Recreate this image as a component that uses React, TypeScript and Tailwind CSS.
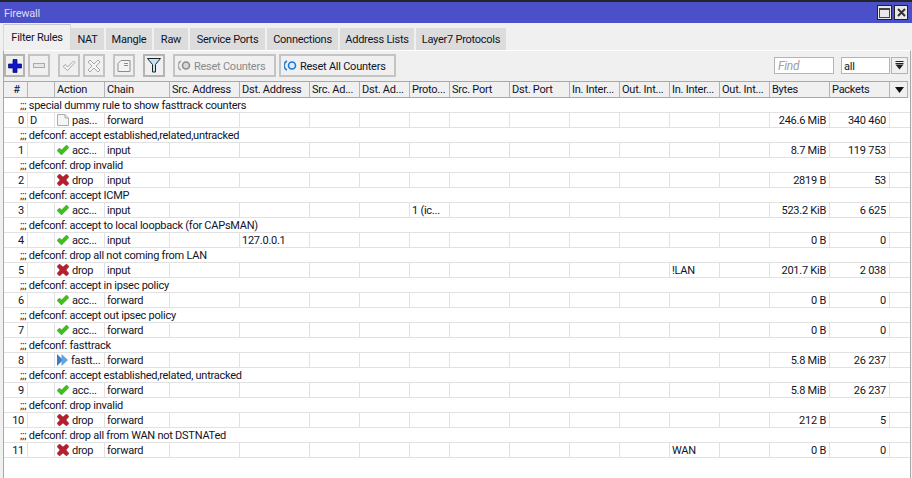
// App.tsx
import type { ReactNode } from 'react';

const cols = 'grid grid-cols-[24px_27px_50px_65px_70px_70px_50px_50px_40px_60px_60px_50px_50px_50px_50px_60px_60px_19px]';

const headers = [
  '#', '', 'Action', 'Chain', 'Src. Address', 'Dst. Address', 'Src. Ad...', 'Dst. Ad...', 'Proto...',
  'Src. Port', 'Dst. Port', 'In. Inter...', 'Out. Int...', 'In. Inter...', 'Out. Int...', 'Bytes', 'Packets',
];

const tabs = [
  { label: 'NAT', w: 'w-[35px]' },
  { label: 'Mangle', w: 'w-[48px]' },
  { label: 'Raw', w: 'w-[36px]' },
  { label: 'Service Ports', w: 'w-[77px]' },
  { label: 'Connections', w: 'w-[73px]' },
  { label: 'Address Lists', w: 'w-[76px]' },
  { label: 'Layer7 Protocols', w: 'w-[92px]' },
];

type Kind = 'accept' | 'drop' | 'passthrough' | 'fasttrack';

interface Rule {
  comment: string;
  num: number;
  flag?: string;
  kind: Kind;
  action: string;
  chain: string;
  dst?: string;
  proto?: string;
  inIf?: string;
  bytes: string;
  packets: string;
}

const rules: Rule[] = [
  { comment: ';;; special dummy rule to show fasttrack counters', num: 0, flag: 'D', kind: 'passthrough', action: 'pas...', chain: 'forward', bytes: '246.6 MiB', packets: '340 460' },
  { comment: ';;; defconf: accept established,related,untracked', num: 1, kind: 'accept', action: 'acc...', chain: 'input', bytes: '8.7 MiB', packets: '119 753' },
  { comment: ';;; defconf: drop invalid', num: 2, kind: 'drop', action: 'drop', chain: 'input', bytes: '2819 B', packets: '53' },
  { comment: ';;; defconf: accept ICMP', num: 3, kind: 'accept', action: 'acc...', chain: 'input', proto: '1 (ic...', bytes: '523.2 KiB', packets: '6 625' },
  { comment: ';;; defconf: accept to local loopback (for CAPsMAN)', num: 4, kind: 'accept', action: 'acc...', chain: 'input', dst: '127.0.0.1', bytes: '0 B', packets: '0' },
  { comment: ';;; defconf: drop all not coming from LAN', num: 5, kind: 'drop', action: 'drop', chain: 'input', inIf: '!LAN', bytes: '201.7 KiB', packets: '2 038' },
  { comment: ';;; defconf: accept in ipsec policy', num: 6, kind: 'accept', action: 'acc...', chain: 'forward', bytes: '0 B', packets: '0' },
  { comment: ';;; defconf: accept out ipsec policy', num: 7, kind: 'accept', action: 'acc...', chain: 'forward', bytes: '0 B', packets: '0' },
  { comment: ';;; defconf: fasttrack', num: 8, kind: 'fasttrack', action: 'fastt...', chain: 'forward', bytes: '5.8 MiB', packets: '26 237' },
  { comment: ';;; defconf: accept established,related, untracked', num: 9, kind: 'accept', action: 'acc...', chain: 'forward', bytes: '5.8 MiB', packets: '26 237' },
  { comment: ';;; defconf: drop invalid', num: 10, kind: 'drop', action: 'drop', chain: 'forward', bytes: '212 B', packets: '5' },
  { comment: ';;; defconf: drop all from WAN not DSTNATed', num: 11, kind: 'drop', action: 'drop', chain: 'forward', inIf: 'WAN', bytes: '0 B', packets: '0' },
];

const ActionIcon = ({ kind }: { kind: Kind }) => {
  if (kind === 'accept') {
    return (
      <svg width="12" height="10" viewBox="0 0 12 10" className="shrink-0">
        <path d="M0 5.5 L2.5 3 L4.5 5 L9.5 0 L12 2.5 L4.5 10 Z" fill="#3fbf1c" stroke="#2c9a12" strokeWidth="0.5" />
      </svg>
    );
  }
  if (kind === 'drop') {
    return (
      <svg width="12" height="12" viewBox="0 0 12 12" className="shrink-0">
        <path d="M0 2.5 L2.5 0 L6 3 L9.5 0 L12 2.5 L9 6 L12 9.5 L9.5 12 L6 9 L2.5 12 L0 9.5 L3 6 Z" fill="#b3202e" stroke="#9c1a26" strokeWidth="0.5" />
      </svg>
    );
  }
  if (kind === 'fasttrack') {
    return (
      <svg width="11" height="12" viewBox="0 0 11 12" className="shrink-0">
        <path d="M0 0 L6 6 L0 12 Z" fill="#3a80c0" />
        <path d="M4.5 0 L11 6 L4.5 12 Z" fill="#62a6de" />
      </svg>
    );
  }
  return (
    <svg width="12" height="12" viewBox="0 0 12 12" className="shrink-0">
      <path d="M0.5 0.5 H8 L11.5 4 V11.5 H0.5 Z" fill="#f4f6f6" stroke="#a8adad" />
      <path d="M8 0.5 V4 H11.5" fill="#dfe3e3" stroke="#a8adad" />
    </svg>
  );
};

const ToolButton = ({ children, active, width = 'w-[22px]' }: { children: ReactNode; active?: boolean; width?: string }) => (
  <div className={`${width} h-[23px] flex items-center justify-center border-2 ${active ? 'border-[#b4b4b4]' : 'border-[#c4c4c4]'} bg-[#f0f0f0]`}>
    {children}
  </div>
);

const Cell = ({ children, right }: { children?: ReactNode; right?: boolean }) => (
  <div className={`h-[14px] pt-[1px] border-r border-[#e2e2e2] overflow-hidden whitespace-nowrap leading-[13px] flex items-center ${right ? 'justify-end pr-[3px]' : 'pl-[2px]'}`}>
    {children}
  </div>
);

const RuleRows = ({ rule }: { rule: Rule }) => (
  <>
    <div className="h-[15px] border-b border-[#e2e2e2] pl-[16px] leading-[16px] whitespace-nowrap">{rule.comment}</div>
    <div className={`${cols} h-[15px] border-b border-[#e2e2e2]`}>
      <Cell right>{rule.num}</Cell>
      <Cell>{rule.flag}</Cell>
      <div className="h-[14px] pl-[2px] flex items-center gap-[3px] border-r border-[#e2e2e2] whitespace-nowrap overflow-hidden">
        <ActionIcon kind={rule.kind} />
        <span className="pt-[2px] leading-[12px]">{rule.action}</span>
      </div>
      <Cell>{rule.chain}</Cell>
      <Cell />
      <Cell>{rule.dst}</Cell>
      <Cell />
      <Cell />
      <Cell>{rule.proto}</Cell>
      <Cell />
      <Cell />
      <Cell />
      <Cell />
      <Cell>{rule.inIf}</Cell>
      <Cell />
      <Cell right>{rule.bytes}</Cell>
      <Cell right>{rule.packets}</Cell>
      <div />
    </div>
  </>
);

export default function App() {
  return (
    <div className="w-[912px] h-[478px] overflow-hidden flex flex-col bg-[#f0f0f0] text-[#10142a] text-[11px] tracking-[-0.25px] [font-family:Roboto,'Liberation_Sans',sans-serif]">
      {/* title bar */}
      <div className="h-[23px] shrink-0 border-t-2 border-[#22242c] bg-[#4b50c8] flex items-center justify-between pl-[4px] pr-[4px] text-[#dcdcf0]">
        <span className="pt-[3px]">Firewall</span>
        <div className="flex gap-[2px]">
          <div className="w-[15px] h-[15px] bg-[#e8e8e8] border border-[#222] flex items-center justify-center">
            <div className="w-[11px] h-[10px] border border-[#444] border-t-2" />
          </div>
          <div className="w-[14px] h-[15px] bg-[#e8e8e8] border border-[#222] flex items-center justify-center">
            <svg width="9" height="9" viewBox="0 0 9 9">
              <path d="M1 1 L8 8 M8 1 L1 8" stroke="#333" strokeWidth="2" />
            </svg>
          </div>
        </div>
      </div>

      {/* tabs */}
      <div className="h-[27px] shrink-0 pl-[3px] flex items-end whitespace-nowrap">
        <div className="w-[68px] h-[26px] pt-[2px] bg-[#f0f0f0] border border-b-0 border-[#d8d8d8] border-t-[#c8c8c8] flex items-center justify-center">Filter Rules</div>
        {tabs.map((tab) => (
          <div key={tab.label} className={`${tab.w} h-[22px] pt-[3px] bg-[#dcdcdc] border-r-2 border-[#f0f0f0] flex items-center justify-center`}>
            {tab.label}
          </div>
        ))}
      </div>

      {/* pane under the tabs */}
      <div className="flex-1 min-h-0 ml-[3px] mr-[1px] border-x border-t border-x-[#a8a8a8] border-t-white flex flex-col">
        <div className="h-[30px] shrink-0 pr-[2px] pt-[3px] flex items-start whitespace-nowrap">
          <ToolButton active width="w-[21px]">
            <svg width="14" height="14" viewBox="0 0 14 14">
              <path d="M5 0.5 H9 V5 H13.5 V9 H9 V13.5 H5 V9 H0.5 V5 H5 Z" fill="#0f15c9" stroke="#050868" strokeWidth="0.7" />
            </svg>
          </ToolButton>
          <div className="ml-[3px]">
            <ToolButton>
              <div className="w-[12px] h-[5px] border border-[#aaa] bg-[#e6e6e6]" />
            </ToolButton>
          </div>
          <div className="ml-[8px]">
            <ToolButton>
              <svg width="14" height="12" viewBox="0 0 14 12">
                <path d="M1 6.5 L3.5 4.5 L5.5 7 L11.5 1 L13 2.5 L5.5 10.5 Z" fill="#f4f4f4" stroke="#a8a8a8" />
              </svg>
            </ToolButton>
          </div>
          <div className="ml-[3px]">
            <ToolButton>
              <svg width="14" height="14" viewBox="0 0 14 14">
                <path d="M1 3 L3 1 L7 5 L11 1 L13 3 L9 7 L13 11 L11 13 L7 9 L3 13 L1 11 L5 7 Z" fill="#f4f4f4" stroke="#a8a8a8" />
              </svg>
            </ToolButton>
          </div>
          <div className="ml-[8px]">
            <ToolButton>
              <svg width="14" height="12" viewBox="0 0 14 12">
                <path d="M1 3.5 L4 0.5 H13 V11.5 H1 Z M7 3.5 H11 M7 5.5 H11" fill="#f4f4f4" stroke="#8c8c8c" />
              </svg>
            </ToolButton>
          </div>
          <div className="ml-[8px]">
            <ToolButton active>
              <svg width="14" height="15" viewBox="0 0 14 15">
                <path d="M0.5 0.5 H13.5 L8.5 6.5 V14 H5.5 V6.5 Z" fill="#bfe6f5" stroke="#222" />
              </svg>
            </ToolButton>
          </div>
          <div className="ml-[8px] w-[103px] h-[23px] border-2 border-[#c4c4c4] flex items-center pl-[3px] gap-[3px] text-[#8a8a8a]">
            <svg width="13" height="11" viewBox="0 0 13 11" className="shrink-0">
              <path d="M3 1 A5 5 0 0 0 3 10" fill="none" stroke="#a8a8a8" strokeWidth="1.6" />
              <circle cx="8" cy="5.5" r="3.5" fill="#d8d8d8" stroke="#8c8c8c" strokeWidth="1.6" />
            </svg>
            <span className="pt-[3px]">Reset Counters</span>
          </div>
          <div className="ml-[3px] w-[117px] h-[23px] border-2 border-[#c4c4c4] flex items-center pl-[3px] gap-[3px]">
            <svg width="13" height="11" viewBox="0 0 13 11" className="shrink-0">
              <path d="M3 1 A5 5 0 0 0 3 10" fill="none" stroke="#2a7fd0" strokeWidth="1.6" />
              <circle cx="8" cy="5.5" r="3.5" fill="#dceefc" stroke="#1a78d8" strokeWidth="1.6" />
            </svg>
            <span className="pt-[3px]">Reset All Counters</span>
          </div>
          <div className="ml-auto mt-[3px] flex items-start">
            <div className="w-[60px] h-[17px] bg-white border border-[#b4b4b4] pl-[3px] leading-[16px] italic text-[12px] text-[#a0a0a0]">Find</div>
            <div className="ml-[7px] w-[49px] h-[17px] bg-white border border-[#b4b4b4] pl-[2px] leading-[17px]">all</div>
            <div className="ml-[1px] w-[17px] h-[17px] border border-[#b4b4b4] flex items-center justify-center">
              <svg width="9" height="9" viewBox="0 0 9 9">
                <path d="M0.5 0.5 H8.5 M0.5 2.5 H8.5" stroke="#222" />
                <path d="M0.5 3.5 H8.5 L4.5 8.5 Z" fill="#222" />
              </svg>
            </div>
          </div>
        </div>

        {/* table */}
        <div className={`${cols} shrink-0 w-[904px] h-[17px] border-t border-b border-[#a8a8a8] border-r border-r-[#b4b4b4] bg-[#f0f0f0]`}>
          {headers.map((h, i) => (
            <div key={i} className={`pl-[2px] border-r border-[#b4b4b4] leading-[16px] whitespace-nowrap overflow-hidden ${i === 0 ? 'text-center' : ''}`}>
              {h}
            </div>
          ))}
          <div className="flex items-center justify-center">
            <svg width="9" height="6" viewBox="0 0 9 6">
              <path d="M0 0 H9 L4.5 6 Z" fill="#111" />
            </svg>
          </div>
        </div>
        <div className="flex-1 bg-white">
          {rules.map((rule) => (
            <RuleRows key={rule.num} rule={rule} />
          ))}
        </div>
      </div>
    </div>
  );
}
